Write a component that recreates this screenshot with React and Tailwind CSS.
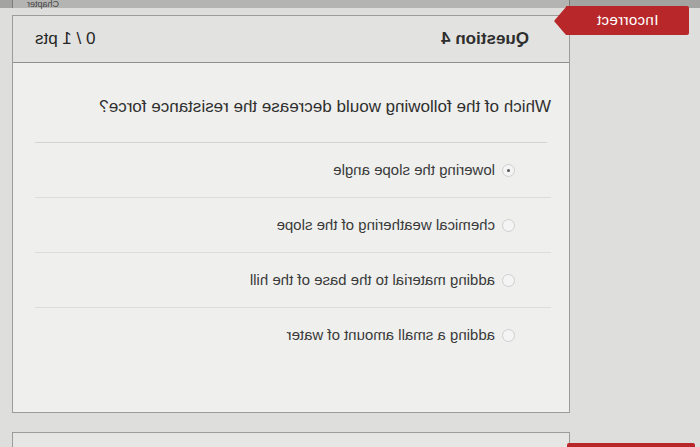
import React from 'react';

const options = [
  { label: 'lowering the slope angle', picked: true },
  { label: 'chemical weathering of the slope', picked: false },
  { label: 'adding material to the base of the hill', picked: false },
  { label: 'adding a small amount of water', picked: false },
];

function Radio({ picked }) {
  return (
    <span className="w-[13px] h-[13px] rounded-full border border-[#cfcfcf] bg-[#f4f4f4] flex items-center justify-center shrink-0">
      {picked && <span className="w-[3px] h-[3px] rounded-full bg-[#555]" />}
    </span>
  );
}

export default function App() {
  return (
    <div
      className="w-[700px] h-[447px] overflow-hidden bg-[#dedfdd] -scale-x-100 flex flex-col text-[#3b3b3b]"
      style={{ fontFamily: '"Liberation Sans", Arial, sans-serif' }}
    >
      {/* tail of the previous card */}
      <div className="h-[8px] bg-[#a3a3a1] flex">
        <div className="ml-[130px] mr-[12px] grow border-x border-[#7d7d7d] bg-[#b4b4b2] flex justify-end items-end pr-[14px]">
          <span className="text-[9px] leading-[7px] text-[#444]">Chapter</span>
        </div>
      </div>

      <div className="relative ml-[130px] mr-[12px] mt-[7px] h-[398px] border border-[#9c9c9c] bg-[#eff0ee] flex flex-col">
        {/* result badge */}
        <div className="absolute -left-[120px] -top-[10px] flex items-center">
          <div className="w-[123px] h-[29px] bg-[#b8282b] rounded-l-[2px] flex items-center justify-center text-white text-[15px] tracking-wide">
            Incorrect
          </div>
          <div className="w-0 h-0 border-y-[14.5px] border-y-transparent border-l-[12px] border-l-[#b8282b]" />
        </div>

        {/* header */}
        <div className="h-[47px] bg-[#e2e3e1] border-b border-[#8f8f8f] flex items-center justify-between pl-[40px] pr-[22px]">
          <span className="text-[17px] font-bold text-[#2e2e2e]">Question 4</span>
          <span className="text-[17px] text-[#262626]">0 / 1 pts</span>
        </div>

        {/* body */}
        <div className="pl-[18px] pr-[22px] pt-[32px]">
          <p className="text-[17px] text-[#2f2f2f] leading-[24px]">
            Which of the following would decrease the resistance force?
          </p>
          <div className="mt-[23px] ml-[4px] border-t border-[#d4d4d2]" />

          <div className="flex flex-col">
            {options.map((o, i) => (
              <div
                key={o.label}
                className={`h-[55px] flex items-center gap-[7px] pl-[36px] ${
                  i < options.length - 1 ? 'border-b border-[#dcdcda]' : ''
                }`}
              >
                <Radio picked={o.picked} />
                <span className="text-[15px] text-[#3a3a3a]">{o.label}</span>
              </div>
            ))}
          </div>
        </div>
      </div>

      {/* top of the next card */}
      <div className="relative ml-[130px] mr-[12px] mt-[19px] grow border-x border-t border-[#9c9c9c] bg-[#e6e7e5]">
        <div className="absolute -left-[126px] top-[10px] w-[128px] h-[12px] rounded-[2px] bg-[#b8282b]" />
      </div>
    </div>
  );
}
